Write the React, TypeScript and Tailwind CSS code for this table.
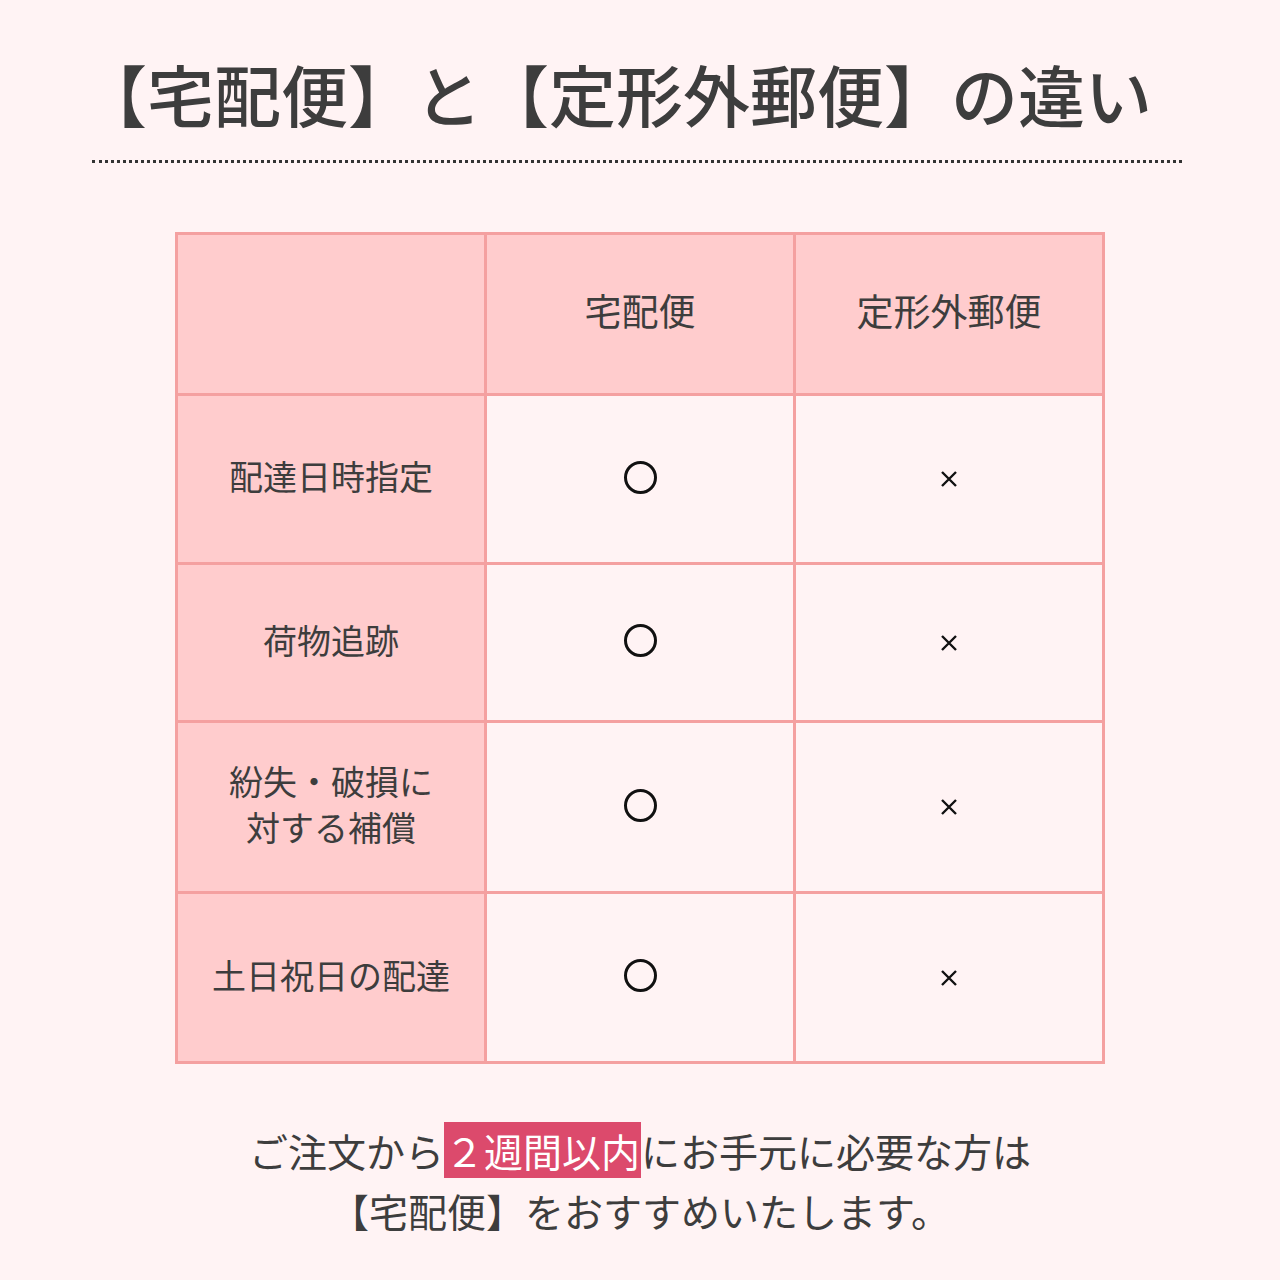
const rows = [
  { label: ['配達日時指定'] },
  { label: ['荷物追跡'] },
  { label: ['紛失・破損に', '対する補償'] },
  { label: ['土日祝日の配達'] },
]

const rowHeights = ['h-[169px]', 'h-[158px]', 'h-[171px]', 'h-[170px]']

export default function App() {
  return (
    <div
      className="w-[1280px] h-[1280px] bg-[#fff3f4] text-[#3d3d3d] flex flex-col items-center"
      style={{ fontFamily: '"Noto Sans CJK JP", "Noto Sans", sans-serif' }}
    >
      <h1 className="mt-[48px] mr-[48px] h-[90px] text-[67px] leading-[90px] font-medium text-[#3d3d3d] whitespace-nowrap">
        【宅配便】と【定形外郵便】の違い
      </h1>
      <div className="mt-[22px] mr-[6px] w-[1090px] border-t-[3px] border-dotted border-[#333]" />

      <div className="mt-[69px] w-[930px] grid grid-cols-3 border-[3px] border-[#f4a0a0] border-r-0 border-b-0">
        <div className="h-[161px] bg-[#ffcccd] border-r-[3px] border-b-[3px] border-[#f4a0a0]" />
        <div className="h-[161px] pb-[6px] bg-[#ffcccd] border-r-[3px] border-b-[3px] border-[#f4a0a0] flex items-center justify-center text-[37px]">
          宅配便
        </div>
        <div className="h-[161px] pb-[6px] bg-[#ffcccd] border-r-[3px] border-b-[3px] border-[#f4a0a0] flex items-center justify-center text-[37px]">
          定形外郵便
        </div>
        {rows.map((r, i) => (
          <div key={i} className="contents">
            <div
              className={`${rowHeights[i]} pb-[6px] bg-[#ffcccd] border-r-[3px] border-b-[3px] border-[#f4a0a0] flex flex-col items-center justify-center text-[34px] leading-[46px]`}
            >
              {r.label.map((l) => (
                <span key={l}>{l}</span>
              ))}
            </div>
            <div
              className={`${rowHeights[i]} pb-[4px] border-r-[3px] border-b-[3px] border-[#f4a0a0] flex items-center justify-center`}
            >
              <div className="w-[33px] h-[33px] rounded-full border-[3px] border-[#111]" />
            </div>
            <div
              className={`${rowHeights[i]} border-r-[3px] border-b-[3px] border-[#f4a0a0] flex items-center justify-center`}
            >
              <svg width="18" height="18" viewBox="0 0 18 18">
                <path d="M2 2 L16 16 M16 2 L2 16" stroke="#111" strokeWidth="2.4" />
              </svg>
            </div>
          </div>
        ))}
      </div>

      <div className="mt-[56px] text-[39px] leading-[60px] text-center text-[#3d3d3d] whitespace-nowrap">
        <p>
          ご注文から<span className="bg-[#dc4a6c] text-white px-[1px]">２週間以内</span>にお手元に必要な方は
        </p>
        <p>【宅配便】をおすすめいたします。</p>
      </div>
    </div>
  )
}
